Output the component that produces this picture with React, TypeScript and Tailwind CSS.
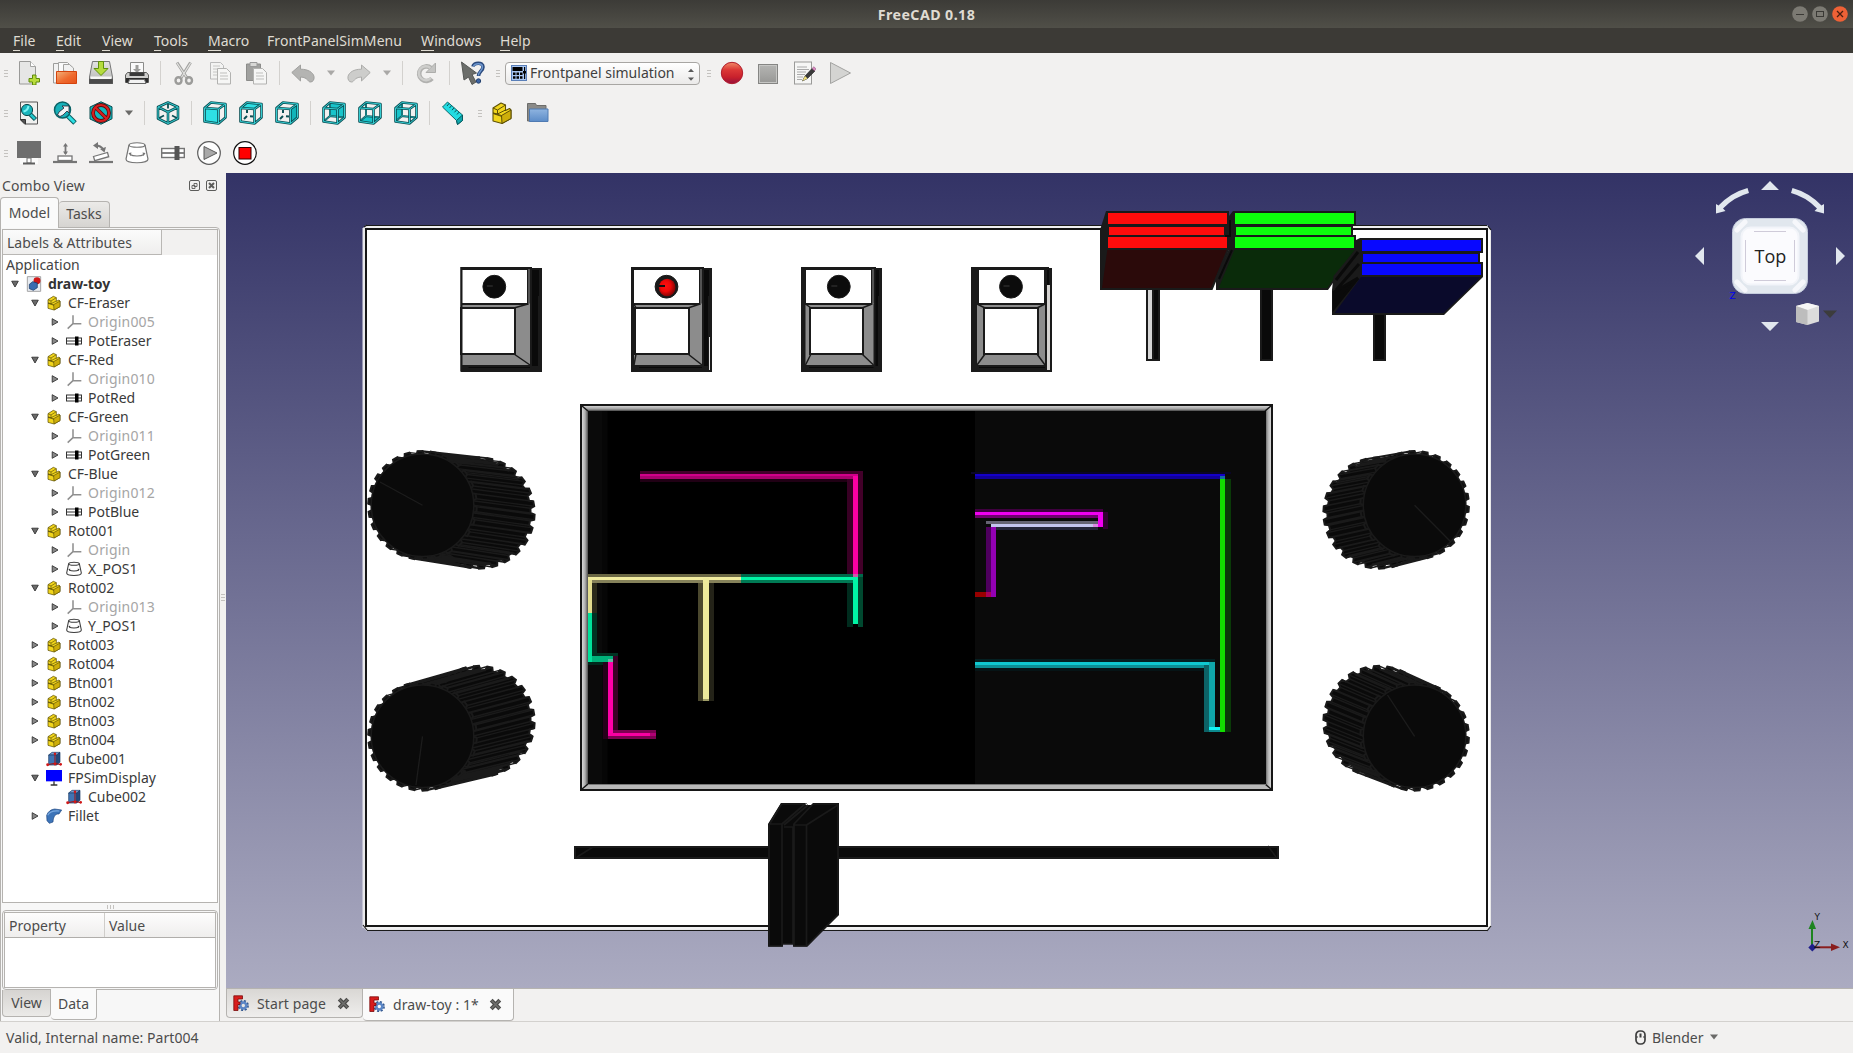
import React from "react";

type Kids = { children?: React.ReactNode };

/* ---------- generic toolbar pieces ---------- */

function Ico({ children, s = 24 }: Kids & { s?: number }) {
  return (
    <svg width={s} height={s} viewBox="0 0 24 24" fill="none" className="shrink-0">
      {children}
    </svg>
  );
}

function Cell({ children }: Kids) {
  return <div className="flex h-9 w-9 shrink-0 items-center justify-center">{children}</div>;
}

function Sep() {
  return (
    <div className="flex h-6 w-[11px] shrink-0 justify-center">
      <div className="h-6 w-px bg-[#d3d1ce]" />
    </div>
  );
}

function Grip({ className = "" }: { className?: string }) {
  return (
    <div className={"flex shrink-0 flex-col items-center gap-[2px] " + className}>
      <div className="h-px w-1 bg-[#c4c2bf]" />
      <div className="h-px w-1 bg-[#c4c2bf]" />
      <div className="h-px w-1 bg-[#c4c2bf]" />
    </div>
  );
}

function Drop({ color = "#a9a8a6" }: { color?: string }) {
  return (
    <div className="flex w-5 shrink-0 justify-center">
      <svg width="8" height="6" viewBox="0 0 8 6">
        <path d="M0 0.5h8L4 5.5z" fill={color} />
      </svg>
    </div>
  );
}

/* ---------- toolbar icons ---------- */

const NewIcon = () => (
  <Ico>
    <path d="M2.500.5h11l5 5v17.500h-16z" fill="#e6e6e5" stroke="#9a9a98" />
    <path d="M13.500.5v5h5" fill="#fff" stroke="#a4a4a2" />
    <path d="M15.500 14h3.500v3.500h3.500v3.500h-3.500v3h-3.500v-3H12v-3.500h3.500z" fill="#b9dc3c" stroke="#5d8a0a" />
  </Ico>
);
const OpenIcon = () => (
  <Ico>
    <path d="M.5 22V2.500h7l1.500 2V22z" fill="#f2f2f2" stroke="#9c9c9a" />
    <path d="M5.500 12V1.500h9l4 4V12z" fill="#fafafa" stroke="#a2a2a0" />
    <path d="M10.500 10V3.500h6l4 3.500v4z" fill="#f1f1f1" stroke="#a2a2a0" />
    <defs>
      <linearGradient id="fo" x1="0" y1="0" x2="1" y2="1">
        <stop offset="0" stopColor="#f2b27b" />
        <stop offset=".55" stopColor="#ef6a2e" />
        <stop offset="1" stopColor="#e5521a" />
      </linearGradient>
    </defs>
    <path d="M3.500 22.500V10.500h20v12z" fill="url(#fo)" stroke="#d5430c" />
  </Ico>
);
const SaveIcon = () => (
  <Ico>
    <defs>
      <linearGradient id="sv" x1="0" y1="0" x2="0" y2="1">
        <stop offset="0" stopColor="#e4e4e4" />
        <stop offset="1" stopColor="#b4b4b2" />
      </linearGradient>
    </defs>
    <path d="M3.500.5h17l3 15.500v6.500H.5V16z" fill="url(#sv)" stroke="#777" />
    <path d="M.5 18h23v4.500H.5z" fill="#4a4a4a" stroke="#555" />
    <path d="M1.500 15.500h21V18h-21z" fill="#f7f7f7" />
    <path d="M9.500.500h5v7h4.500L12 14.500 5 7.500h4.500z" fill="#b6dc3e" stroke="#5f900c" />
  </Ico>
);
const PrintIcon = () => (
  <Ico>
    <path d="M5.500 12V1.500h13V12z" fill="#fafafa" stroke="#8c8c8a" />
    <path d="M10.500 4h3v4h2.500L12 12 8 8h2.500z" fill="#9c9c9a" />
    <path d="M2.500 11.500h19l2 2.500v7.500H.5V14z" fill="#cfcfcd" stroke="#5c5c5a" />
    <path d="M4.500 11.500h15V15h-15z" fill="#3a3a3a" />
    <path d="M1 17h22v4.500H1z" fill="#2c2c2c" />
    <path d="M4.500 18.500h15l1.500 4H3z" fill="#f2f2f2" stroke="#666" />
  </Ico>
);
const CutIcon = () => (
  <Ico>
    <path d="M5 1.500 15 17M18.500 1.500 9 17" stroke="#a2a2a0" strokeWidth="3" />
    <path d="M5 2 15 17M18.500 2 9 17" stroke="#e3e3e1" strokeWidth="1.200" />
    <ellipse cx="6.500" cy="19.500" rx="3" ry="3.300" stroke="#9c9c9a" strokeWidth="2.400" />
    <ellipse cx="17" cy="19.500" rx="3" ry="3.300" stroke="#9c9c9a" strokeWidth="2.400" />
  </Ico>
);
const CopyIcon = () => (
  <Ico>
    <path d="M2.500 1.500h10l3 3V18h-13z" fill="#f3f3f2" stroke="#bababa" />
    <path d="M5 5h7M5 8h8M5 11h4M5 14h4" stroke="#c6c6c4" />
    <path d="M9.500 7.500h9l4 4v11.500h-13z" fill="#f6f6f5" stroke="#b2b2b0" />
    <path d="M12 12h7M12 15h8M12 18h8" stroke="#bfbfbd" />
  </Ico>
);
const PasteIcon = () => (
  <Ico>
    <path d="M2.500 3h14v16.500h-14z" fill="#a0a09e" stroke="#8c8c8a" />
    <path d="M6 1.500h7v4H6z" fill="#d8d8d6" stroke="#999" />
    <path d="M9.500 7.500h9l4 4v11.500h-13z" fill="#f6f6f5" stroke="#b2b2b0" />
    <path d="M12 12h7M12 15h8M12 18h8" stroke="#bfbfbd" />
  </Ico>
);
const UndoIcon = () => (
  <Ico>
    <path d="M.8 11.500 9.500 4v4.200c8 0 12.500 3.300 13.500 7.300.5 3-1 5.500-3.500 5.500-3 0-2-4.500-10-5v4z" fill="#b4b4b2" stroke="#a0a09e" strokeLinejoin="round" />
  </Ico>
);
const RedoIcon = () => (
  <Ico>
    <path d="M23.200 11.500 14.500 4v4.200C6.500 8.200 2 11.500 1 15.500c-.5 3 1 5.500 3.500 5.500 3 0 2-4.500 10-5v4z" fill="#cdcdcb" stroke="#acacaa" strokeLinejoin="round" />
  </Ico>
);
const RefreshIcon = () => (
  <Ico>
    <path d="M17 7A7.300 7.300 0 1 0 18 17.500" stroke="#b1b1af" strokeWidth="4.600" />
    <path d="M21.500 2v9.500H12z" fill="#c4c4c2" stroke="#adadab" />
    <path d="M16.500 7A7 7 0 1 0 17 17" stroke="#cececc" strokeWidth="2.400" />
  </Ico>
);
const HelpIcon = () => (
  <Ico>
    <path d="M.5 1 15.500 12l-4.500 1.500L15 21l-4 2.500L7.500 16 3 19z" fill="#6b6d6a" stroke="#565856" />
    <path d="M12 5.500C12.500 1.500 22 .5 22 6c0 4-4.500 4-4.500 9" stroke="#2b4a7d" strokeWidth="3.600" />
    <path d="M12.500 5.500C13.500 2 21.500 1.500 21.500 6c0 4-4 4-4 8.500" stroke="#6f98cf" strokeWidth="1.500" />
    <circle cx="17.500" cy="20" r="2.200" fill="#3b63a3" stroke="#24426f" />
  </Ico>
);
const CalcIcon = () => (
  <svg width="16" height="16" viewBox="0 0 16 16" className="shrink-0">
    <rect width="16" height="16" fill="#a8c6f2" />
    <rect x=".5" y=".5" width="15" height="15" fill="none" stroke="#5a7fb8" />
    <path d="M1.500 2h10v4h-10zM13 2h1.200v12H13zM12 6h3v2.500h-3z" fill="#000" />
    <path d="M2 7.500h2.500V10H2zM5.500 7.500H8V10H5.500zM9 7.500h2.500V10H9zM2 11.300h2.500v2.500H2zM5.500 11.300H8v2.500H5.500zM9 11.300h2.500v2.500H9z" fill="#000" />
  </svg>
);
const RecordIcon = () => (
  <Ico>
    <defs>
      <linearGradient id="rc" x1="0" y1="0" x2="0" y2="1">
        <stop offset="0" stopColor="#f08a68" />
        <stop offset=".35" stopColor="#dc3836" />
        <stop offset=".7" stopColor="#c8202c" />
        <stop offset="1" stopColor="#96103c" />
      </linearGradient>
    </defs>
    <circle cx="12" cy="12" r="10.700" fill="url(#rc)" stroke="#b01c2c" />
  </Ico>
);
const StopIcon = () => (
  <Ico>
    <defs>
      <linearGradient id="st" x1="0" y1="0" x2="0" y2="1">
        <stop offset="0" stopColor="#b5b5b3" />
        <stop offset="1" stopColor="#979795" />
      </linearGradient>
    </defs>
    <rect x="2.500" y="3.500" width="19" height="19" fill="url(#st)" stroke="#858583" />
    <rect x="3.500" y="4.500" width="17" height="17" stroke="#c6c6c4" />
  </Ico>
);
const EditIcon = () => (
  <Ico>
    <rect x="2.500" y="1" width="17" height="22" fill="#f6f6f5" stroke="#9a9a98" />
    <path d="M5 6h10M5 8.500h12M5 11h9M5 13.500h8M5 16h6M5 18.500h5" stroke="#aaa" />
    <path d="M10.500 20 13 15l7-7.500 3 2.500-7.500 7.500z" fill="#3a3a3a" stroke="#222" strokeWidth=".6" />
    <path d="M10.500 20 13 15l2.500 2.500z" fill="#f2e27a" />
    <path d="m20 7.500 2-1.800 2 2.300-1.500 1.800z" fill="#d88ac0" stroke="#8a4a78" strokeWidth=".5" />
  </Ico>
);
const PlayIcon = () => (
  <Ico>
    <path d="M2.500 1.500 22.500 12 2.500 22.500z" fill="#d4d4d2" stroke="#a3a3a1" />
  </Ico>
);

const FitIcon = () => (
  <Ico>
    <path d="M3.500 1h17v22H7.500l-4-4z" fill="#f0f0ef" stroke="#555" />
    <path d="M3.500 18.500h5V23z" fill="#555" stroke="#333" />
    <path d="m13 13 5.500 5.500" stroke="#0b4a4e" strokeWidth="4.500" />
    <path d="m13 13 5 5" stroke="#21c5ca" strokeWidth="2.500" />
    <circle cx="10" cy="9" r="5.600" fill="#19b5bc" stroke="#0b4a4e" />
    <path d="M6.500 10.500C9 10 11 8 11.500 5" stroke="#7af3f5" strokeWidth="2" />
  </Ico>
);
const ZoomIcon = () => (
  <Ico>
    <path d="m14 14 8 8" stroke="#0b5a5e" strokeWidth="5" />
    <path d="m14 14 7.500 7.500" stroke="#2be0e4" strokeWidth="3" />
    <circle cx="9.500" cy="9" r="8" fill="#18b0b8" stroke="#0b6266" strokeWidth="1.500" />
    <path d="M4.500 14 6 11l5-4-2-2h7v7l-2-2-4 4-3 1.500z" fill="#f4f4f4" stroke="#223" strokeWidth=".8" />
  </Ico>
);
const NoIcon = () => (
  <Ico>
    <path d="m12 .8 11 5v12l-11 5.400L1 18V6z" fill="#12b8be" stroke="#0b4a4e" />
    <circle cx="12" cy="12" r="8" stroke="#5a0a0a" strokeWidth="3.800" />
    <path d="m6.500 6.500 11 11" stroke="#5a0a0a" strokeWidth="3.600" />
    <circle cx="12" cy="12" r="8" stroke="#d81f1f" strokeWidth="2.200" />
    <path d="m6.500 6.500 11 11" stroke="#d81f1f" strokeWidth="2.200" />
  </Ico>
);
const IsoIcon = () => {
  const d = "m12 1.500 10 4.500v11.500L12 22.500 2 17.500V6zM2 6l10 5 10-5M12 11v11.500";
  const hid = "M12 1.500v6M2 17.500l6-3M22 17.500l-6-3";
  return (
    <Ico>
      <path d={hid} stroke="#0b5055" strokeWidth="1.800" />
      <path d={d} stroke="#0b5055" strokeWidth="2.600" strokeLinejoin="round" />
      <path d={d} stroke="#35cdd2" strokeWidth="1" strokeLinejoin="round" />
    </Ico>
  );
};
const faces: Record<string, string> = {
  front: "M1.500 7 15.500 8v14.500L1.500 20.500z",
  top: "M1.500 7 8 1.500 22.500 3 15.500 8z",
  right: "M15.500 8 22.500 3v13.500l-7 6z",
  rear: "M8 1.500 22.500 3v13.500L8 15z",
  bottom: "M1.500 20.500 8 15l14.500 1.500-7 6z",
  left: "M1.500 7 8 1.500V15l-6.500 5.500z",
};
function CubeIcon({ face }: { face: string }) {
  const behind = face === "rear" || face === "bottom" || face === "left";
  const back = behind ? "M8 1.500V15l14.500 1.500M8 15l-6.500 5.500" : "M8 9v3M8 15l-3 3M11 15.300l3 .3";
  const edges = "M1.500 7 15.500 8v14.500L1.500 20.500zM1.500 7 8 1.500 22.500 3 15.500 8M22.500 3v13.500l-7 6";
  return (
    <Ico>
      {behind && <path d={faces[face]} fill="#18c4ca" />}
      <path d={back} stroke="#0b5055" strokeWidth="2" />
      {behind && <path d={back} stroke="#2fc4c9" strokeWidth=".7" />}
      {!behind && <path d={faces[face]} fill={face === "right" ? "#12b4ba" : "#2ee0e4"} />}
      <path d={edges} stroke="#0b5055" strokeWidth="2.600" strokeLinejoin="round" />
      <path d={edges} stroke="#35cdd2" strokeWidth="1" strokeLinejoin="round" />
    </Ico>
  );
}
const RulerIcon = () => (
  <Ico>
    <path d="M1.500 6 6.500 1 21.500 14v5.500l-5 4-1-4z" fill="#22dce2" stroke="#0b6a6e" />
    <path d="M15.500 19.500 21.500 14v5.500l-5 4z" fill="#0ea8ae" stroke="#0b5a5e" />
    <path d="m8 2.500-2 2.500M10.500 4.700 8.500 7M13 6.800l-2 2.400M15.500 9l-2 2.300M18 11.200l-2 2.300" stroke="#0b5055" />
  </Ico>
);
function PartIcon({ s = 24 }: { s?: number }) {
  return (
    <Ico s={s}>
      <path d="M3 12V7l8-5 4.500 2v5.500l4-2L21 9v8.500l-9 5L3 20z" fill="#f1d51c" stroke="#5e5106" strokeWidth="1.100" strokeLinejoin="round" />
      <path d="M11.500 14.500 21 9v8.500l-9 5z" fill="#cdae0a" stroke="#5e5106" />
      <path d="m3 7 4.500 2 8-5M7.500 9v4L3 12l8.500 2.500M7.500 13l8-4M3 12.500l9 3" stroke="#5e5106" />
    </Ico>
  );
}
const FolderIcon = () => (
  <Ico>
    <path d="M1.500 20V2.500h8l1 2h9.500v15.500z" fill="#8a8a88" stroke="#6c6c6a" />
    <defs>
      <linearGradient id="fb" x1="0" y1="0" x2="0" y2="1">
        <stop offset="0" stopColor="#8fb4e0" />
        <stop offset="1" stopColor="#5c8cc8" />
      </linearGradient>
    </defs>
    <path d="M3.500 20.500V8h18.500v12.500z" fill="url(#fb)" stroke="#4f7ab2" />
  </Ico>
);

const MonitorIcon = () => (
  <Ico>
    <path d="M3 17h18v6H3z" fill="#fff" opacity=".7" />
    <rect x="0" y="0" width="24" height="17" fill="#6e6e6e" />
    <path d="M10 17h4v5h-4z" fill="#fff" stroke="#6e6e6e" />
    <path d="M6 22.500h12" stroke="#5e5e5e" strokeWidth="2" />
  </Ico>
);
const PushIcon = () => (
  <Ico>
    <path d="M0 21h24" stroke="#757575" strokeWidth="2.200" />
    <rect x="5" y="15" width="14" height="4.500" fill="#fff" stroke="#757575" strokeWidth="1.300" />
    <path d="M12.500 4v9" stroke="#757575" strokeWidth="1.800" />
    <path d="m12.500 2 2.500 3.500h-5zM12.500 14 15 10.500h-5z" fill="#757575" />
  </Ico>
);
const ToggleIcon = () => (
  <Ico>
    <path d="M0 21h24" stroke="#757575" strokeWidth="2.200" />
    <path d="m4.500 15.500 14-4 1.200 4.200-14 4z" fill="#fff" stroke="#757575" strokeWidth="1.300" />
    <path d="M7 4.500c4 0 6 2 7.500 4" stroke="#757575" strokeWidth="2" />
    <path d="M4 4.500 9 1v7zM15.500 11.500 11 8l6-2z" fill="#757575" />
  </Ico>
);
function RotIcon({ s = 24, c = "#757575", w = 1.2 }: { s?: number; c?: string; w?: number }) {
  return (
    <Ico s={s}>
      <path d="M4 4 1 18c0 5 22 5 22 0L20 4C19 1 5 1 4 4z" fill="#fff" stroke={c} strokeWidth={w} />
      <path d="M4 4c0 3 16 3 16 0" stroke={c} strokeWidth={w} />
      <path d="M5 13.500c3 2 11 2 14 0" stroke={c} strokeWidth={w} />
      <path d="m3.500 12 3-.5-1 3.500zM20.500 12l-3-.5 1 3.500z" fill={c} />
    </Ico>
  );
}
const PotIcon = () => (
  <Ico>
    <rect x=".7" y="7.500" width="22.600" height="9" fill="#fff" stroke="#757575" strokeWidth="1.400" />
    <path d="M1 12h22" stroke="#757575" strokeWidth="1.800" />
    <rect x="13.500" y="5" width="5" height="14" fill="#555" />
  </Ico>
);
const PotSmall = () => (
  <svg width="16" height="16" viewBox="0 0 16 16" fill="none" className="shrink-0">
    <rect x=".5" y="5" width="15" height="6" fill="#fff" stroke="#333" />
    <path d="M1 8h14" stroke="#333" />
    <rect x="9" y="3.500" width="3.500" height="9" fill="#000" />
  </svg>
);
const RunIcon = () => (
  <Ico>
    <circle cx="12" cy="12" r="11.300" fill="#fdfdfd" stroke="#5b5b5b" strokeWidth="1.200" />
    <path d="M7 5.500 20 12 7 18.500z" fill="#a9a9a9" stroke="#5b5b5b" />
  </Ico>
);
const HaltIcon = () => (
  <Ico>
    <circle cx="12" cy="12" r="11.300" fill="#fff" stroke="#111" strokeWidth="1.200" />
    <rect x="6" y="6.500" width="12" height="11.500" fill="#f00" stroke="#300" />
  </Ico>
);

/* ---------- tree ---------- */

const DocIcon = () => (
  <Ico s={16}>
    <path d="M2 1h20v22H2z" fill="#e8ecf2" stroke="#a4a4a4" strokeWidth="1.500" />
    <circle cx="16.500" cy="7" r="5.200" fill="#d01818" />
    <path d="m5 12.500 5-4 7 2v7l-6 4-6-2.500z" fill="#3a6cb0" stroke="#12325f" />
  </Ico>
);
const OriginIcon = () => (
  <Ico s={16}>
    <path d="M10.500 2v12.500L2.500 22M10.500 14.500H23" stroke="#8f8f8f" strokeWidth="2.300" />
  </Ico>
);
const CubeSolid = () => (
  <Ico s={16}>
    <path d="M4 6l5-4h12l-5 4z" fill="#7aa4d6" stroke="#1a3a63" />
    <path d="M4 6h12v15H4z" fill="#3f74b4" stroke="#1a3a63" />
    <path d="m16 6 5-4v15l-5 4z" fill="#234a80" stroke="#1a3a63" />
    <path d="M13.500 5v14M2 20.500l11.500-2 8.500 2" stroke="#a01616" strokeWidth="1.600" />
    <circle cx="13.500" cy="4" r="1.900" fill="#d01818" />
    <circle cx="2.500" cy="20.500" r="2.200" fill="#d01818" />
    <circle cx="13.500" cy="19.500" r="2.200" fill="#d01818" />
    <circle cx="22" cy="20" r="2" fill="#d01818" />
  </Ico>
);
const DisplayIcon = () => (
  <Ico s={16}>
    <rect width="24" height="17" fill="#0000ff" />
    <path d="M12 17v5M7 22.500h10" stroke="#333" strokeWidth="2" />
  </Ico>
);
const FilletIcon = () => (
  <Ico s={16}>
    <path d="M1 11C3 5 8 2 13 1.500L23.500 3l-4 6c-5-.5-8.500 3-9 12L5 23l-3.500-4z" fill="#3d74b8" stroke="#1c4580" />
    <path d="M2.500 11C5 6 10 3.500 20 4.500" stroke="#7aa9df" strokeWidth="1.800" />
  </Ico>
);

type Row = { t: string; l: number; e?: "o" | "c"; i: string };
const part = (t: string, e: "o" | "c"): Row => ({ t, l: 1, e, i: "part" });
const rows: Row[] = [
  { t: "draw-toy", l: 0, e: "o", i: "doc" },
  part("CF-Eraser", "o"),
  { t: "Origin005", l: 2, e: "c", i: "origin" },
  { t: "PotEraser", l: 2, e: "c", i: "pot" },
  part("CF-Red", "o"),
  { t: "Origin010", l: 2, e: "c", i: "origin" },
  { t: "PotRed", l: 2, e: "c", i: "pot" },
  part("CF-Green", "o"),
  { t: "Origin011", l: 2, e: "c", i: "origin" },
  { t: "PotGreen", l: 2, e: "c", i: "pot" },
  part("CF-Blue", "o"),
  { t: "Origin012", l: 2, e: "c", i: "origin" },
  { t: "PotBlue", l: 2, e: "c", i: "pot" },
  part("Rot001", "o"),
  { t: "Origin", l: 2, e: "c", i: "origin" },
  { t: "X_POS1", l: 2, e: "c", i: "rot" },
  part("Rot002", "o"),
  { t: "Origin013", l: 2, e: "c", i: "origin" },
  { t: "Y_POS1", l: 2, e: "c", i: "rot" },
  part("Rot003", "c"),
  part("Rot004", "c"),
  part("Btn001", "c"),
  part("Btn002", "c"),
  part("Btn003", "c"),
  part("Btn004", "c"),
  { t: "Cube001", l: 1, i: "cube" },
  { t: "FPSimDisplay", l: 1, e: "o", i: "display" },
  { t: "Cube002", l: 2, i: "cube" },
  { t: "Fillet", l: 1, e: "c", i: "fillet" },
];

const treeIcon: Record<string, React.ReactNode> = {
  doc: <DocIcon />,
  part: <PartIcon s={16} />,
  origin: <OriginIcon />,
  pot: <PotSmall />,
  rot: <RotIcon s={16} c="#3c3c3c" w={1.6} />,
  cube: <CubeSolid />,
  display: <DisplayIcon />,
  fillet: <FilletIcon />,
};
const indent = ["pl-[4px]", "pl-[24px]", "pl-[44px]"];

function TreeRow({ r }: { r: Row }) {
  return (
    <div className={"flex h-[19px] items-center " + indent[r.l]}>
      <div className="flex w-4 justify-center">
        {r.e && (
          <svg width="8" height="8" viewBox="0 0 8 8">
            <path
              d={r.e === "o" ? "M.7 1.200h6.600L4 7z" : "M1.200.7v6.600L7 4z"}
              fill={r.e === "o" ? "#6a6a6a" : "#888"}
              stroke="#333"
              strokeWidth=".9"
            />
          </svg>
        )}
      </div>
      <div className="ml-[3px] flex w-4 items-center">{treeIcon[r.i]}</div>
      <span
        className={
          "ml-[6px] whitespace-nowrap " +
          (r.l === 0 ? "font-bold text-[#333]" : r.i === "origin" ? "tracking-[0.2px] text-[#a5a5a5]" : "text-[#3a3a3a]")
        }
      >
        {r.t}
      </span>
    </div>
  );
}

/* ---------- 3D scene ---------- */

function Knob({ fx, fy, bx, by, ix, iy }: { fx: number; fy: number; bx: number; by: number; ix: number; iy: number }) {
  const N = 26;
  const ring = (cx: number, cy: number, R: number) =>
    Array.from({ length: N * 4 }, (_, i) => {
      const k = i % 4;
      const a = ((Math.floor(i / 4) + [0, 0.12, 0.5, 0.62][k]) / N) * Math.PI * 2;
      const r = k === 1 || k === 2 ? R : R - 4;
      return [cx + Math.cos(a) * r, cy + Math.sin(a) * r];
    });
  const f = ring(fx, fy, 54.3);
  const b = ring(bx, by, 55.6);
  const pts = (p: number[][]) => p.map((q) => q[0].toFixed(1) + "," + q[1].toFixed(1)).join(" ");
  const ribs = f.map((p, i) => "M" + p[0].toFixed(1) + " " + p[1].toFixed(1) + "L" + b[i][0].toFixed(1) + " " + b[i][1].toFixed(1)).join("");
  return (
    <g>
      <line x1={fx} y1={fy} x2={bx} y2={by} stroke="#0a0a0a" strokeWidth="107" />
      <polygon points={pts(b)} fill="#0a0a0a" stroke="#1a1a1a" strokeWidth="2" />
      <path d={ribs} stroke="#1a1a1a" strokeWidth="1.400" />
      <polygon points={pts(f)} fill="#0e0e0e" stroke="#1a1a1a" strokeWidth="2" />
      <circle cx={fx} cy={fy} r="51.300" fill="#0a0a0a" stroke="#1a1a1a" strokeWidth="1.500" />
      <line x1={fx} y1={fy} x2={ix} y2={iy} stroke="#1c1c1c" strokeWidth="1.300" />
    </g>
  );
}

type SwitchProps = { x0: number; x1: number; lx0: number; lx1: number; gx0: number; gx1: number; ix0: number; ix1: number; cx: number; on?: boolean; strip?: boolean };
function Switch({ x0, x1, lx0, lx1, gx0, gx1, ix0, ix1, cx, on, strip }: SwitchProps) {
  return (
    <g>
      <path d={`M${x0} 267H${lx1 + 5}V268H${x1}V372H${x0}z`} fill="#1a1a1a" />
      <path d={`M${gx1 + 2} 270H${x1 - 3}V296H${x1 - 4}V366H${gx1 + 2}z`} fill="#0a0a0a" />
      <path d={`M${x0 + 8} 367.500H${gx1}`} stroke="#0a0a0a" />
      <rect x={lx0} y="270" width={lx1 - lx0} height="33" fill="#fff" />
      {strip ? null : <rect x={lx1 + 1.500} y="269" width="1" height="35" fill="#8c8c8c" />}
      <path d={`M${gx0} 305H${lx1 + 1}L${gx1} 303V365H${gx0}z`} fill="#8c8c8c" />
      <path d={`M${ix1} 308L${lx1 + 1} 304M${ix1} 354L${gx1} 365`} stroke="#1a1a1a" strokeWidth="1.500" />
      {gx0 < ix0 && <path d={`M${ix0} 308L${gx0} 304M${ix0} 354L${gx0} 365`} stroke="#1a1a1a" strokeWidth="1.500" />}
      <rect x={ix0 - 1} y="308" width={ix1 - ix0 + 2} height="46" fill="#fff" stroke="#1a1a1a" strokeWidth="2" />
      <path d={`M${x0} 267h2v104h-2z`} fill="#1a1a1a" />
      <circle cx={cx} cy="286.700" r="11.400" fill={on ? "#1a1a1a" : "#0c0c0c"} stroke="#1a1a1a" />
      {on && <ellipse cx={cx + 0.700} cy="287.500" rx="8.300" ry="8.800" fill="url(#led)" />}
      <path d={`M${cx - 7.500} 286h6`} stroke={on ? "#111" : "#222"} strokeWidth="2" />
      {strip && <rect x="1047" y="285" width="3" height="85" fill="#d4d2d0" />}
      {on && <rect x="709" y="337" width="1" height="33" fill="#e0e0e0" />}
    </g>
  );
}

const R = (x0: number, y0: number, x1: number, y1: number, c: string) => (
  <rect key={`${x0}-${y0}-${x1}-${y1}-${c}`} x={x0} y={y0} width={x1 - x0} height={y1 - y0} fill={c} />
);

function Trace() {
  return (
    <g shapeRendering="crispEdges">
      {R(640, 471, 863, 474, "#42002a")}
      {R(640, 474, 858, 476, "#d0008a")}
      {R(640, 476, 858, 479, "#a8006e")}
      {R(640, 479, 863, 482, "#200014")}
      {R(847, 479, 853, 574, "#380024")}
      {R(853, 476, 858, 577, "#fa00a2")}
      {R(858, 474, 863, 574, "#420029")}
      {R(588, 574, 741, 577, "#6a6744")}
      {R(588, 577, 741, 580, "#f1eca0")}
      {R(588, 580, 741, 583, "#85815a")}
      {R(741, 574, 863, 577, "#00684a")}
      {R(741, 577, 858, 580, "#00f5a5")}
      {R(741, 580, 863, 583, "#007a54")}
      {R(847, 583, 853, 627, "#002c1e")}
      {R(853, 577, 858, 624, "#00f5a5")}
      {R(858, 577, 863, 627, "#00482f")}
      {R(853, 574, 858, 577, "#cc58a8")}
      {R(698, 583, 703, 701, "#4b482e")}
      {R(703, 578, 709, 699, "#edea9c")}
      {R(703, 699, 709, 701, "#a09e68")}
      {R(709, 583, 714, 701, "#242318")}
      {R(588, 580, 592, 613, "#e2dc8e")}
      {R(592, 583, 597, 613, "#2b2a1b")}
      {R(588, 613, 592, 662, "#00e19a")}
      {R(592, 613, 597, 656, "#003223")}
      {R(597, 653, 618, 656, "#003322")}
      {R(592, 656, 613, 662, "#00b27a")}
      {R(588, 662, 608, 665, "#00281c")}
      {R(603, 662, 608, 739, "#26001a")}
      {R(608, 662, 613, 736, "#ff00a8")}
      {R(608, 659, 613, 662, "#66b8a0")}
      {R(613, 656, 618, 730, "#3a0026")}
      {R(613, 730, 656, 733, "#7d0052")}
      {R(608, 733, 650, 736, "#f800a2")}
      {R(650, 733, 656, 736, "#b00074")}
      {R(608, 736, 656, 739, "#7d0052")}
      {R(971, 472, 1231, 474, "#0a0626")}
      {R(975, 474, 1225, 476, "#1400c8")}
      {R(975, 476, 1220, 479, "#10009a")}
      {R(1220, 476, 1225, 479, "#1468a8")}
      {R(1220, 479, 1225, 732, "#12de00")}
      {R(1225, 479, 1231, 732, "#0a3a08")}
      {R(975, 509, 1103, 512, "#3f003f")}
      {R(975, 512, 1103, 515, "#f000f0")}
      {R(975, 515, 1098, 518, "#70006e")}
      {R(1098, 515, 1103, 527, "#f000f0")}
      {R(1103, 512, 1108, 529, "#300030")}
      {R(986, 521, 1098, 524, "#666474")}
      {R(986, 527, 1098, 530, "#26263a")}
      {R(991, 524, 1093, 527, "#c4c4ee")}
      {R(1093, 524, 1098, 527, "#d888e0")}
      {R(986, 527, 991, 592, "#4e005e")}
      {R(991, 527, 996, 597, "#9300b4")}
      {R(975, 592, 986, 597, "#980000")}
      {R(986, 592, 991, 597, "#a80058")}
      {R(975, 659, 1215, 662, "#042022")}
      {R(975, 662, 1209, 665, "#10c8d0")}
      {R(975, 665, 1204, 668, "#0c9096")}
      {R(975, 668, 1204, 671, "#061416")}
      {R(1204, 665, 1209, 732, "#0c6266")}
      {R(1209, 662, 1215, 727, "#10a6aa")}
      {R(1209, 727, 1220, 730, "#12f4f4")}
      {R(1209, 730, 1220, 732, "#0c8a8e")}
    </g>
  );
}

function Scene() {
  return (
    <svg width="1627" height="815" viewBox="226 173 1627 815" fill="none" className="block">
      <defs>
        <linearGradient id="bg" x1="0" y1="0" x2="0" y2="1">
          <stop offset="0" stopColor="#333366" />
          <stop offset="1" stopColor="#ababc1" />
        </linearGradient>
        <radialGradient id="led" cx=".4" cy=".42" r=".62">
          <stop offset="0" stopColor="#ff1010" />
          <stop offset=".5" stopColor="#ee0808" />
          <stop offset="1" stopColor="#7a0404" />
        </radialGradient>
        <linearGradient id="fl" x1="0" y1="0" x2="1" y2="0">
          <stop offset="0" stopColor="#d6d6d6" />
          <stop offset=".5" stopColor="#b0b0b0" />
          <stop offset="1" stopColor="#4c4c4c" />
        </linearGradient>
        <linearGradient id="ft" x1="0" y1="0" x2="0" y2="1">
          <stop offset="0" stopColor="#d0d0d0" />
          <stop offset=".6" stopColor="#a0a0a0" />
          <stop offset="1" stopColor="#444" />
        </linearGradient>
      </defs>
      <rect x="226" y="173" width="1627" height="815" fill="url(#bg)" />

      {/* base plate */}
      <path d="M366 225H1487L1491 230V927L1487 931H367L363 927V228z" fill="#e9e9ea" />
      <path d="M363 228V928" stroke="#e8e8ee" />
      <path d="M366 225.500H1487M367 930.500H1487" stroke="#1a1a1a" />
      <path d="M1488 226l3 4M364 227l3-2M363 925l4 5M1487 931l4-5" stroke="#1a1a1a" strokeWidth="1.200" />
      <rect x="366" y="229" width="1121" height="697" fill="#fff" stroke="#161616" strokeWidth="2" />
      <path d="M1489 230V926" stroke="#fff" strokeWidth="2" />
      <path d="M368 928H1486M368 227H1486" stroke="#f6f6f6" />

      <Switch x0={460.5} x1={542} lx0={462} lx1={527} gx0={462} gx1={530} ix0={462} ix1={514} cx={494.3} />
      <Switch x0={631} x1={712} lx0={634} lx1={699} gx0={634} gx1={702} ix0={636} ix1={688} cx={666.5} on />
      <Switch x0={801} x1={882} lx0={806} lx1={871} gx0={805.5} gx1={873.5} ix0={811} ix1={862} cx={838.8} />
      <Switch x0={971} x1={1052} lx0={979} lx1={1044} gx0={977} gx1={1045} ix0={985} ix1={1037} cx={1011} strip />

      {/* colour sliders */}
      <path d="M1146 285h14v76h-14zM1260 285h13v76h-13zM1373 310h13v51h-13z" fill="#1a1a1a" />
      <path d="M1148 285h4v74h-4z" fill="#d6d6d6" />
      <path d="M1154 285h4v74h-4zM1262 285h9v74h-9zM1375 310h9v49h-9z" fill="#0a0a0a" />
      <path d="M1106 211H1229V250L1212.500 290H1100V230z" fill="#1a1a1a" />
      <path d="M1108 213h119v11h-119zM1109 227h115v8h-115zM1108 237h119v11h-119z" fill="#ff0c0c" />
      <path d="M1107.300 250H1226.700L1211 288H1102z" fill="#2b0a0a" />
      <path d="M1229 216L1233 211H1356V226H1353V235H1356V250L1328 290H1216V277L1229 249z" fill="#1a1a1a" />
      <path d="M1230 220v16l-5 0M1232 250L1219 279" stroke="#0a0a0a" strokeWidth="2" />
      <path d="M1235 213h119v11h-119zM1236 227h115v8h-115zM1235 237h119v11h-119z" fill="#0cff0c" />
      <path d="M1234.300 250H1354.700L1327.300 288H1218.700z" fill="#0a2b0a" />
      <path d="M1356 240L1360 238H1483V253H1480V262H1483V277L1444 315H1332V290L1333.500 276L1355 250z" fill="#1a1a1a" />
      <path d="M1358 252L1336 280M1359 264L1336 290M1358 278L1334 308V292z" stroke="#0a0a0a" strokeWidth="3" fill="#0a0a0a" />
      <path d="M1362 240h119v11h-119zM1363 254h115v8h-115zM1362 264h119v11h-119z" fill="#0808ff" />
      <path d="M1361 277H1481L1443.700 313H1334.700z" fill="#0a0a2b" />

      <Knob fx={422.5} fy={505.3} bx={479} by={513} ix={380} iy={482} />
      <Knob fx={422.5} fy={736.3} bx={479} by={721.5} ix={416} iy={785} />
      <Knob fx={1414.6} fy={505.3} bx={1379} by={513} ix={1450.7} iy={541.7} />
      <Knob fx={1414.6} fy={736.3} bx={1379} by={721.5} ix={1387.5} iy={695} />

      {/* display */}
      <rect x="580" y="404" width="693" height="387" fill="#161616" />
      <rect x="582" y="406" width="689" height="383" fill="#c4c4c4" />
      <rect x="582" y="406" width="6" height="383" fill="url(#fl)" />
      <rect x="1266" y="406" width="6" height="383" fill="url(#fl)" transform="rotate(180 1268.500 597.500)" />
      <path d="M582 406H1271L1265.500 411H588z" fill="url(#ft)" />
      <path d="M582 789H1271L1265.500 784H588z" fill="#b8b8b8" />
      <path d="M582 406l6 5M1271 406l-6 5M582 789l6-5M1271 789l-6-5" stroke="#161616" strokeWidth="1.500" />
      <rect x="588" y="411" width="678" height="373" fill="#0a0a0a" />
      <rect x="602" y="411" width="6" height="373" fill="#060606" />
      <rect x="607.500" y="411" width="367.500" height="373" fill="#000" />
      <path d="M588 784.500H1266" stroke="#777" />
      <Trace />

      {/* eraser slider */}
      <rect x="575" y="847" width="703" height="11" fill="#0a0a0a" stroke="#1a1a1a" strokeWidth="2" />
      <path d="M577 857l16-10M1276 857l-8-11" stroke="#1a1a1a" strokeWidth="1.500" />
      <path d="M768 824L781 803H805V805H813V803H839V915L807 946.500H793V944H783V946.500H768z" fill="#0a0a0a" />
      <path d="M769 825V946H782V824L805 804H781.500zM782 824H769M784 827H793V944H783M793 825H806.500V946H794V824L813 804H838V914.500L807 946M806.500 825L838 805M784 825L808 805" stroke="#1a1a1a" strokeWidth="1.700" />

      {/* navigation cube */}
      <g fill="#e1e7ee">
        <path d="M1761 190h18l-9-9zM1761 322h18l-9 9zM1704 247v18l-9-9zM1836 247v18l9-9z" />
        <path d="M1716 213.500V204l2.500 1.500Q1731 192.500 1747.500 188l1.500 5Q1734 197 1723 208.500l2.500 2.500zM1824 213.500V204l-2.500 1.500Q1809 192.500 1792.500 188l-1.500 5Q1806 197 1817 208.500l-2.500 2.500z" />
      </g>
      <rect x="1732.500" y="218.500" width="75" height="75" rx="13" fill="#e1e7ee" stroke="#c4cbdc" />
      <path d="M1737 230L1745 222M1795 222L1803 230M1737 282L1745 290M1795 290L1803 282" stroke="#f6f7fb" strokeWidth="5" strokeLinecap="round" />
      <rect x="1741.500" y="227.500" width="57" height="57" rx="9" fill="#fbfbfe" stroke="#f2f4f9" strokeWidth="2" />
      <path d="M1754 231.500h32M1754 280.500h32M1745.500 240v32M1794.500 240v32" stroke="#cfcbd9" />
      <text x="1770.500" y="263" textAnchor="middle" fontFamily="Open Sans, Noto Sans, sans-serif" fontSize="18" fill="#222">Top</text>
      <text x="1729.500" y="299" fontFamily="DejaVu Sans, sans-serif" fontSize="9" fill="#0000f0">Z</text>
      <path d="M1796 306l11.500-3L1819 306v15.500l-11.500 3.500L1796 322z" fill="#dcdcdc" />
      <path d="M1796 306l11.500-3L1819 306l-11.500 4z" fill="#f6f6f6" />
      <path d="M1796 306l11.500 4v15L1796 322z" fill="#bdbdbd" />
      <path d="M1823 310.500h14l-7 7.500z" fill="#3c3c3c" />

      {/* axis cross */}
      <path d="M1812 947V926" stroke="#1e8420" strokeWidth="2" />
      <path d="M1808.500 929h7.500l-3.500-9z" fill="#1e8420" />
      <path d="M1813 947.300H1832" stroke="#8a1e1e" strokeWidth="2" />
      <path d="M1831 943.500v7.500l9-3.700z" fill="#8a1e1e" />
      <path d="M1812.300 943.500l4 4-4 4-4-4z" fill="#1e1e8a" />
      <g fontFamily="DejaVu Sans, sans-serif" fontSize="9" fill="#111">
        <text x="1814.500" y="920">Y</text>
        <text x="1814" y="948">Z</text>
        <text x="1842.500" y="948">X</text>
      </g>
    </svg>
  );
}

/* ---------- window ---------- */

function Menu({ t, w, u = true }: { t: string; w: string; u?: boolean }) {
  return (
    <div className={"shrink-0 whitespace-nowrap " + w}>
      {u ? <span className="border-b border-[#dfdbd2]">{t[0]}</span> : t[0]}
      {t.slice(1)}
    </div>
  );
}

function FcLogo() {
  return (
    <svg width="16" height="17" viewBox="0 0 16 17" className="shrink-0">
      <circle cx="10.300" cy="10.500" r="4.300" fill="none" stroke="#34588f" strokeWidth="2.600" strokeDasharray="1.900 1.477" />
      <circle cx="10.300" cy="10.500" r="3" fill="none" stroke="#5b86c6" strokeWidth="2.600" />
      <path d="M.8.8h8.700V4H5v3h2v2.500H5v6H.8z" fill="#d81c1c" stroke="#7a0c0c" strokeWidth=".8" />
    </svg>
  );
}

function CloseX() {
  return (
    <svg width="13" height="13" viewBox="0 0 13 13" className="shrink-0">
      <path d="M2.200 2.200l8.600 8.600M10.800 2.200l-8.600 8.600" stroke="#4b4b49" strokeWidth="4" />
      <path d="M2.500 2.500l8 8M10.500 2.500l-8 8" stroke="#70706e" strokeWidth="1.500" />
    </svg>
  );
}

function WinBtn({ kind }: { kind: "min" | "max" | "close" }) {
  return (
    <svg width="16" height="16" viewBox="0 0 16 16">
      <circle cx="8" cy="8" r="7.800" fill={kind === "close" ? "#ee6136" : "#7c7a73"} />
      {kind === "min" && <path d="M4 8.500h8" stroke="#3a3935" />}
      {kind === "max" && <rect x="4.500" y="5.500" width="7" height="5" fill="none" stroke="#3a3935" />}
      {kind === "close" && <path d="M5 5l6 6M11 5l-6 6" stroke="#4a1e10" strokeWidth="1.300" />}
    </svg>
  );
}

export default function App() {
  return (
    <div className="flex h-[1053px] w-[1853px] flex-col overflow-hidden bg-[#f2f1f0] font-['Noto_Sans',sans-serif] text-[14px] leading-[19px] text-[#4c4c4c]">
      <div className="relative flex h-7 shrink-0 items-center justify-center bg-linear-to-b from-[#3c3b37] to-[#504f48] text-[14.2px] font-bold tracking-[0.45px] text-[#dfdbd2]">
        <span>FreeCAD 0.18</span>
        <div className="absolute top-[6px] right-[5px] flex gap-1">
          <WinBtn kind="min" />
          <WinBtn kind="max" />
          <WinBtn kind="close" />
        </div>
      </div>
      <div className="flex h-[25px] shrink-0 items-center bg-[#3c3a36] pl-[13px] leading-[17px] text-[#dfdbd2]">
        <Menu t="File" w="w-[43px]" />
        <Menu t="Edit" w="w-[46px]" />
        <Menu t="View" w="w-[52px]" />
        <Menu t="Tools" w="w-[54px]" />
        <Menu t="Macro" w="w-[59px]" />
        <Menu t="FrontPanelSimMenu" w="w-[154px] tracking-[0.08px]" u={false} />
        <Menu t="Windows" w="w-[79px] tracking-[0.1px]" />
        <Menu t="Help" w="w-[60px]" />
      </div>

      <div className="flex h-10 shrink-0 items-center">
        <Grip className="w-[11px]" />
        <Cell><NewIcon /></Cell>
        <Cell><OpenIcon /></Cell>
        <Cell><SaveIcon /></Cell>
        <Cell><PrintIcon /></Cell>
        <Sep />
        <Cell><CutIcon /></Cell>
        <Cell><CopyIcon /></Cell>
        <Cell><PasteIcon /></Cell>
        <Sep />
        <Cell><UndoIcon /></Cell>
        <Drop />
        <Cell><RedoIcon /></Cell>
        <Drop />
        <Sep />
        <Cell><RefreshIcon /></Cell>
        <Sep />
        <Cell><HelpIcon /></Cell>
        <Grip className="w-[14px]" />
        <div className="flex h-[23px] w-[195px] shrink-0 items-center rounded border border-[#a8a6a3] bg-linear-to-b from-white to-[#ebeae9] px-[5px]">
          <CalcIcon />
          <span className="ml-[3px] grow -translate-y-px whitespace-nowrap text-[#3f3f3f]">Frontpanel simulation</span>
          <svg width="6" height="14" viewBox="0 0 6 14" className="mt-[3px]">
            <path d="M0 4h6L3 .8zM0 9.500h6L3 12.700z" fill="#5a5a5a" />
          </svg>
        </div>
        <Grip className="ml-1 w-[10px]" />
        <Cell><RecordIcon /></Cell>
        <Cell><StopIcon /></Cell>
        <Cell><EditIcon /></Cell>
        <Cell><PlayIcon /></Cell>
      </div>
      <div className="flex h-10 shrink-0 items-center">
        <Grip className="w-[11px]" />
        <Cell><FitIcon /></Cell>
        <Cell><ZoomIcon /></Cell>
        <Cell><NoIcon /></Cell>
        <Drop color="#6a6a68" />
        <Sep />
        <Cell><IsoIcon /></Cell>
        <Sep />
        <Cell><CubeIcon face="front" /></Cell>
        <Cell><CubeIcon face="top" /></Cell>
        <Cell><CubeIcon face="right" /></Cell>
        <Sep />
        <Cell><CubeIcon face="rear" /></Cell>
        <Cell><CubeIcon face="bottom" /></Cell>
        <Cell><CubeIcon face="left" /></Cell>
        <Sep />
        <Cell><RulerIcon /></Cell>
        <Grip className="w-[13px] pl-1" />
        <Cell><PartIcon /></Cell>
        <Cell><FolderIcon /></Cell>
      </div>
      <div className="flex h-10 shrink-0 items-center">
        <Grip className="w-[11px]" />
        <Cell><MonitorIcon /></Cell>
        <Cell><PushIcon /></Cell>
        <Cell><ToggleIcon /></Cell>
        <Cell><RotIcon /></Cell>
        <Cell><PotIcon /></Cell>
        <Cell><RunIcon /></Cell>
        <Cell><HaltIcon /></Cell>
      </div>

      <div className="flex h-[848px] shrink-0">
        <div className="flex w-[220px] shrink-0 flex-col">
          <div className="flex h-[25px] shrink-0 items-center pr-[2px] pl-[2px]">
            <span className="grow tracking-[0.1px]">Combo View</span>
            <svg width="29" height="12" viewBox="0 0 29 12" fill="none" stroke="#5c5c5a">
              <rect x=".5" y=".5" width="10" height="10" rx="1.500" />
              <path d="M5 3.500h3v3H5zM3 5.500h3v3H3z" strokeWidth=".9" />
              <rect x="17.500" y=".5" width="10" height="10" rx="1.500" />
              <path d="M20 3l5 5M25 3l-5 5" strokeWidth="2" />
            </svg>
          </div>
          <div className="flex h-[29px] shrink-0 items-end">
            <div className="z-10 -mb-px flex h-[31px] w-[59px] items-center justify-center rounded-t border border-b-0 border-[#b5b3b0] bg-[#fafafa] pb-[2px]">Model</div>
            <div className="flex h-[26px] w-[51px] items-center justify-center rounded-t border border-b-0 border-l-0 border-[#b5b3b0] bg-linear-to-b from-[#ebeae8] to-[#d6d4d1] pb-[2px]">Tasks</div>
          </div>
          <div className="flex grow flex-col rounded-tr border border-[#b5b3b0] bg-[#f7f7f7] px-px pt-px pb-px">
            <div className="flex h-[674px] shrink-0 flex-col border border-[#b5b3b0] bg-white">
              <div className="flex h-[25px] shrink-0 bg-[#f2f1f0]">
                <div className="flex w-[159px] items-center border-r border-b border-[#b9b7b4] bg-linear-to-b from-[#fbfbfb] to-[#efeeed] pl-[4px]">Labels &amp; Attributes</div>
              </div>
              <div className="flex flex-col">
                <div className="h-[19px] pl-[3px] text-[#444]">Application</div>
                {rows.map((r) => (
                  <TreeRow key={r.t} r={r} />
                ))}
              </div>
            </div>
            <div className="flex h-[7px] shrink-0 items-center justify-center gap-[2px]">
              <div className="h-1 w-px bg-[#c4c2bf]" />
              <div className="h-1 w-px bg-[#c4c2bf]" />
              <div className="h-1 w-px bg-[#c4c2bf]" />
            </div>
            <div className="h-[80px] shrink-0 rounded border border-[#b5b3b0] p-px">
              <div className="flex h-full flex-col border border-[#b5b3b0] bg-white">
                <div className="flex h-[25px] shrink-0 items-center border-b border-[#b0aeab] bg-linear-to-b from-[#fdfdfd] to-[#efeeed]">
                  <div className="flex h-full w-[100px] items-center border-r border-[#cfcdca] pl-[4px]">Property</div>
                  <div className="pl-[4px]">Value</div>
                </div>
              </div>
            </div>
            <div className="flex items-start">
              <div className="flex h-[27px] w-[49px] items-center justify-center rounded-b border border-t-0 border-[#b5b3b0] bg-linear-to-b from-[#d6d4d1] to-[#ebeae8] pb-px">View</div>
              <div className="-mt-px flex h-[31px] w-[46px] items-center justify-center rounded-b border border-t-0 border-l-0 border-[#b5b3b0] bg-[#fafafa] pb-px">Data</div>
            </div>
          </div>
        </div>
        <div className="flex w-[6px] shrink-0 items-center justify-center">
          <Grip />
        </div>
        <div className="flex grow flex-col">
          <Scene />
          <div className="flex h-[33px] items-start border-t border-[#b5b3b0]">
            <div className="flex h-[29px] w-[137px] items-center rounded-b border border-t-0 border-[#b5b3b0] bg-linear-to-b from-[#d9d7d4] to-[#efeeed] pl-[6px]">
              <FcLogo />
              <span className="ml-[8px] w-[80px] whitespace-nowrap tracking-[0.1px]">Start page</span>
              <CloseX />
            </div>
            <div className="flex h-[32px] w-[151px] items-center rounded-b border border-t-0 border-l-0 border-[#b5b3b0] bg-[#fafafa] pl-[6px]">
              <FcLogo />
              <span className="ml-[8px] w-[96px] whitespace-nowrap tracking-[0.1px]">draw-toy : 1*</span>
              <CloseX />
            </div>
          </div>
        </div>
      </div>
      <div className="flex h-8 shrink-0 items-center border-t border-[#d3d1ce] pb-px pl-[6px]">
        <span className="w-[1629px] tracking-[0.05px]">Valid, Internal name: Part004</span>
        <svg width="11" height="15" viewBox="0 0 11 15" fill="none" stroke="#3f3f3f" className="shrink-0">
          <rect x="1" y="1" width="9" height="13" rx="4" strokeWidth="1.700" />
          <path d="M5.500 3.500v4" strokeWidth="2" />
          <path d="M1 7h2M8 7h2" />
        </svg>
        <span className="ml-[6px] w-[52px]">Blender</span>
        <Drop color="#6a6a68" />
      </div>
    </div>
  );
}
